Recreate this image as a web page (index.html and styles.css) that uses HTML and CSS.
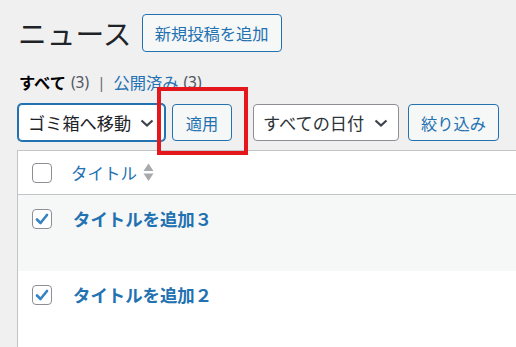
FILE: index.html
```html
<!DOCTYPE html>
<html lang="ja">
<head>
<meta charset="utf-8">
<link rel="stylesheet" href="styles.css">
</head>
<body>
<div class="wrap">
  <div class="title-row">
    <h1 class="page-title">ニュース</h1>
    <a class="btn btn-new">新規投稿を追加</a>
  </div>
  <div class="subsub">
    <span class="current">すべて</span><span class="count">(3)</span><span class="sep">|</span><a class="link">公開済み</a><span class="count">(3)</span>
  </div>
  <div class="tablenav">
    <div class="select select-bulk focused"><span>ゴミ箱へ移動</span>
      <svg class="chev" width="14" height="8" viewBox="0 0 14 8"><path d="M1.5 1.5 L7 6.5 L12.5 1.5" fill="none" stroke="#3c434a" stroke-width="2.2"/></svg>
    </div>
    <a class="btn btn-apply">適用</a>
    <div class="select select-date"><span>すべての日付</span>
      <svg class="chev" width="14" height="8" viewBox="0 0 14 8"><path d="M1.5 1.5 L7 6.5 L12.5 1.5" fill="none" stroke="#3c434a" stroke-width="2.2"/></svg>
    </div>
    <a class="btn btn-filter">絞り込み</a>
    <div class="highlight"></div>
  </div>
  <div class="table">
    <div class="thead">
      <span class="cb"></span>
      <a class="col-title">タイトル</a>
      <svg class="sort" width="11" height="19" viewBox="0 0 11 19"><path d="M0.5 8 L5.5 0.5 L10.5 8 Z" fill="#a7aaad"/><path d="M0.5 10.5 L10.5 10.5 L5.5 18 Z" fill="#a7aaad"/></svg>
    </div>
    <div class="trow alt">
      <span class="cb checked"><svg width="18" height="18" viewBox="0 0 18 18"><path d="M4 9.5 L7.5 13 L14 5" fill="none" stroke="#3582c4" stroke-width="2.6" stroke-linecap="round" stroke-linejoin="round"/></svg></span>
      <a class="row-title">タイトルを追加３</a>
    </div>
    <div class="trow">
      <span class="cb checked"><svg width="18" height="18" viewBox="0 0 18 18"><path d="M4 9.5 L7.5 13 L14 5" fill="none" stroke="#3582c4" stroke-width="2.6" stroke-linecap="round" stroke-linejoin="round"/></svg></span>
      <a class="row-title">タイトルを追加２</a>
    </div>
  </div>
</div>
</body>
</html>
```

FILE: styles.css
```css
html, body {
  margin: 0;
  padding: 0;
  background: #f0f0f1;
  overflow: hidden;
}
body {
  font-family: "Noto Sans", "Noto Sans CJK JP", sans-serif;
  color: #3c434a;
  width: 516px;
  height: 347px;
}
.wrap {
  padding-left: 17px;
  padding-top: 14px;
}
.title-row {
  display: flex;
  align-items: center;
  height: 38px;
}
.page-title {
  margin: 0 10px 0 1px;
  font-family: "Noto Sans CJK JP", sans-serif;
  font-weight: 400;
  font-size: 28.75px;
  line-height: 38px;
  color: #1d2327;
}
.btn {
  display: inline-flex;
  align-items: center;
  justify-content: center;
  box-sizing: border-box;
  border: 1px solid #2271b1;
  border-radius: 4px;
  background: #f6f7f7;
  color: #2271b1;
  font-family: "Noto Sans CJK JP", sans-serif;
  font-size: 16.25px;
  padding: 0 12px;
  white-space: nowrap;
}
.btn-new {
  height: 38px;
  width: 140px;
}
.subsub {
  margin-top: 20px;
  height: 20px;
  display: flex;
  align-items: center;
  font-family: "Noto Sans CJK JP", sans-serif;
  font-size: 16.25px;
  line-height: 20px;
  padding-left: 2px;
}
.current {
  font-weight: 700;
  color: #000;
}
.count {
  color: #50575e;
  font-family: "Noto Sans", sans-serif;
  font-size: 15.5px;
  margin-left: 5px;
}
.sep {
  color: #646970;
  margin: 0 8px 0 8px;
  font-family: "Noto Sans", sans-serif;
  font-size: 15px;
}
.link {
  color: #2271b1;
}
.tablenav {
  position: relative;
  margin-top: 12px;
  height: 37px;
  display: flex;
  align-items: center;
}
.select {
  box-sizing: border-box;
  height: 37px;
  border: 1px solid #8c8f94;
  border-radius: 4px;
  background: #fff;
  color: #2c3338;
  font-family: "Noto Sans CJK JP", sans-serif;
  font-size: 17.2px;
  display: flex;
  align-items: center;
  justify-content: space-between;
  padding: 0 10px 0 9px;
}
.select.focused {
  border-color: #2271b1;
  box-shadow: 0 0 0 1px #2271b1;
  color: #1d2327;
}
.select-bulk {
  margin-left: 1px;
  width: 147px;
}
.select-date {
  width: 146px;
  margin-left: 21px;
}
.chev {
  flex: none;
}
.btn-apply {
  margin-left: 7px;
  height: 37px;
  width: 60px;
}
.btn-filter {
  margin-left: 9px;
  height: 37px;
  width: 91px;
}
.highlight {
  position: absolute;
  left: 140px;
  top: -17px;
  width: 91px;
  height: 68px;
  box-sizing: border-box;
  border: 4px solid #e3171c;
  pointer-events: none;
}
.table {
  margin-top: 9px;
  border: 1px solid #c3c4c7;
  border-right: none;
  background: #fff;
  font-family: "Noto Sans CJK JP", sans-serif;
}
.thead {
  height: 44px;
  box-sizing: border-box;
  border-bottom: 1px solid #c3c4c7;
  display: flex;
  align-items: center;
  padding-left: 14px;
}
.cb {
  flex: none;
  box-sizing: border-box;
  width: 20px;
  height: 20px;
  border: 1px solid #8c8f94;
  border-radius: 4px;
  background: #fff;
  display: flex;
  align-items: center;
  justify-content: center;
}
.col-title {
  margin-left: 19px;
  color: #2271b1;
  font-size: 16.5px;
  line-height: 20px;
}
.sort {
  margin-left: 6px;
}
.trow {
  height: 76px;
  box-sizing: border-box;
  display: flex;
  align-items: flex-start;
  padding-left: 14px;
  padding-top: 14px;
}
.trow.alt {
  background: #f6f7f7;
}
.row-title {
  margin-left: 21px;
  margin-top: -2px;
  color: #2271b1;
  font-weight: 700;
  font-size: 17.4px;
  line-height: 24px;
}
```
